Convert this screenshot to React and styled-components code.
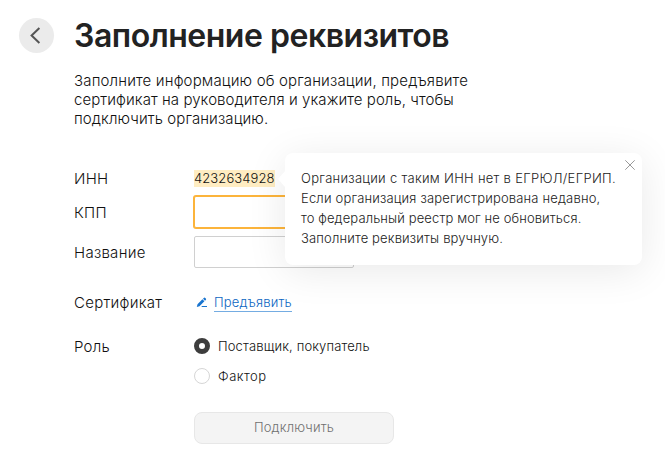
import React, { useState } from 'react';
import styled, { createGlobalStyle } from 'styled-components';

const GlobalStyle = createGlobalStyle`
    * {
        box-sizing: border-box;
    }

    body {
        margin: 0;
        background-color: #fff;
        color: #111;
        font-family: Inter, "Liberation Sans", sans-serif;
        font-size: 15px;
        font-weight: 300;
    }
`;

const Page = styled.main`
    display: grid;
    grid-template-columns: 35px 1fr;
    column-gap: 20px;
    height: 463px;
    padding: 18px 0 0 19px;
    overflow: hidden;
`;

const BackButton = styled.button`
    display: flex;
    align-items: center;
    justify-content: center;
    width: 35px;
    height: 35px;
    padding: 0;
    border: none;
    border-radius: 50%;
    background-color: #ebebeb;
`;

const Title = styled.h1`
    margin: 0;
    color: #222;
    font-size: 32px;
    font-weight: 600;
    line-height: 36px;
    letter-spacing: -0.48px;
    white-space: nowrap;
`;

const Intro = styled.p`
    margin: 17px 0 0;
    line-height: 19px;
    white-space: nowrap;
`;

const Line = styled.span`
    display: block;
    letter-spacing: ${({ $spacing }) => $spacing || '0'};
`;

const Form = styled.form`
    margin-top: 40px;
`;

const Row = styled.div`
    display: grid;
    grid-template-columns: 120px 1fr;
    align-items: start;
    height: ${({ $height }) => $height};
`;

const Label = styled.label`
    line-height: 20px;
    letter-spacing: 0.28px;
    padding-top: ${({ $top }) => $top || '1px'};
`;

const Inn = styled.div`
    position: relative;
    width: 81px;
    height: 17px;
    margin-top: 2px;
    background-color: #ffedc2;
    font-size: 13px;
    line-height: 17px;
    letter-spacing: 0.1px;
    white-space: nowrap;
`;

const Input = styled.input`
    width: 160px;
    height: 32px;
    padding: 0 9px;
    border: 1px solid #d0d0d0;
    border-radius: 2px;
    background-color: #fff;
    outline: none;
    font: inherit;

    ${({ $warning }) => $warning && `
        border-color: #fcb43b;
        box-shadow: 0 0 0 1px #fcb43b;
    `}
`;

const Tooltip = styled.div`
    position: absolute;
    top: -17px;
    left: 91px;
    z-index: 10;
    width: 357px;
    height: 112px;
    padding: 15px 16px;
    border-radius: 8px;
    background-color: #fff;
    box-shadow: 0 6px 40px rgba(0, 0, 0, 0.09);
    color: #222;
    line-height: 20px;

    &::before {
        content: "";
        position: absolute;
        top: 18px;
        left: -7px;
        border: solid transparent;
        border-width: 8px 7px 8px 0;
        border-right-color: #fff;
    }
`;

const CloseButton = styled.button`
    position: absolute;
    top: 7px;
    right: 7px;
    display: flex;
    padding: 0;
    border: none;
    background: none;
`;

const CertLink = styled.a`
    display: flex;
    align-items: center;
    gap: 5px;
    padding-left: 2px;
    color: #0b66c2;
    font-size: 13px;
    text-decoration: none;
`;

const LinkText = styled.span`
    height: 20px;
    border-bottom: 1px solid #74ace2;
    line-height: 20px;
    letter-spacing: 0.2px;
`;

const RadioGroup = styled.div`
    display: flex;
    flex-direction: column;
    gap: 10px;
`;

const RadioLabel = styled.label`
    display: flex;
    align-items: center;
    gap: 8px;
    height: 20px;
    font-size: 13px;
    letter-spacing: ${({ $spacing }) => $spacing};
`;

const Radio = styled.input`
    appearance: none;
    width: 16px;
    height: 16px;
    margin: 0;
    border: 1px solid #d6d6d6;
    border-radius: 50%;
    background-color: #fff;

    &:checked {
        border: 5px solid #3d3d3d;
    }
`;

const Submit = styled.button`
    display: block;
    width: 200px;
    height: 32px;
    margin-left: 120px;
    padding: 0 0 2px;
    border: 1px solid #e7e7e7;
    border-radius: 8px;
    background-color: #f4f4f4;
    color: #707070;
    font: inherit;
    font-size: 13px;
    letter-spacing: 0.18px;
`;

const BackIcon = () => (
    <svg width="35" height="35" viewBox="0 0 35 35" fill="none">
        <path d="M20.4 10L12.6 17.5L20.4 25" stroke="#555" strokeWidth="2" />
    </svg>
);

const CloseIcon = () => (
    <svg width="10" height="10" viewBox="0 0 10 10" fill="none">
        <path d="M0.3 0.3L9.7 9.7M9.7 0.3L0.3 9.7" stroke="#999" />
    </svg>
);

const PencilIcon = () => (
    <svg width="13" height="12" viewBox="0 0 13 12" fill="#1874cf">
        <path d="M0.8 10.9L1.5 8.2L6.4 3.3L8.4 5.3L3.5 10.2ZM7 2.7L7.8 1.9Q8.6 1.2 9.3 1.9L9.8 2.4Q10.5 3.1 9.8 3.9L9 4.7ZM6.2 10H11V11H5.2Z" />
    </svg>
);

const roles = [
    { id: 'supplier', title: 'Поставщик, покупатель', spacing: '0.14px' },
    { id: 'factor', title: 'Фактор', spacing: '0.5px' },
];

const App = () => {
    const [role, setRole] = useState('supplier');
    const [hint, setHint] = useState(true);

    return (
        <Page>
            <GlobalStyle />
            <BackButton type="button" aria-label="Назад">
                <BackIcon />
            </BackButton>
            <section>
                <Title>Заполнение реквизитов</Title>
                <Intro>
                    <Line $spacing="0.15px">Заполните информацию об организации, предъявите</Line>
                    <Line $spacing="0.07px">сертификат на руководителя и укажите роль, чтобы</Line>
                    <Line $spacing="0.09px">подключить организацию.</Line>
                </Intro>
                <Form>
                    <Row $height="28px">
                        <Label>ИНН</Label>
                        <Inn>
                            4232634928
                            {hint && (
                                <Tooltip>
                                    <Line $spacing="0.29px">Организации с таким ИНН нет в ЕГРЮЛ/ЕГРИП.</Line>
                                    <Line $spacing="0.18px">Если организация зарегистрирована недавно,</Line>
                                    <Line $spacing="0.12px">то федеральный реестр мог не обновиться.</Line>
                                    <Line $spacing="0.15px">Заполните реквизиты вручную.</Line>
                                    <CloseButton type="button" aria-label="Закрыть" onClick={() => setHint(false)}>
                                        <CloseIcon />
                                    </CloseButton>
                                </Tooltip>
                            )}
                        </Inn>
                    </Row>
                    <Row $height="40px">
                        <Label htmlFor="kpp" $top="7px">КПП</Label>
                        <Input id="kpp" $warning />
                    </Row>
                    <Row $height="56px">
                        <Label htmlFor="name" $top="7px">Название</Label>
                        <Input id="name" />
                    </Row>
                    <Row $height="44px">
                        <Label>Сертификат</Label>
                        <CertLink href="#">
                            <PencilIcon />
                            <LinkText>Предъявить</LinkText>
                        </CertLink>
                    </Row>
                    <Row $height="76px">
                        <Label>Роль</Label>
                        <RadioGroup>
                            {roles.map(({ id, title, spacing }) => (
                                <RadioLabel key={id} $spacing={spacing}>
                                    <Radio
                                        type="radio"
                                        name="role"
                                        checked={role === id}
                                        onChange={() => setRole(id)}
                                    />
                                    {title}
                                </RadioLabel>
                            ))}
                        </RadioGroup>
                    </Row>
                    <Submit type="button" disabled>Подключить</Submit>
                </Form>
            </section>
        </Page>
    );
};

export default App;
